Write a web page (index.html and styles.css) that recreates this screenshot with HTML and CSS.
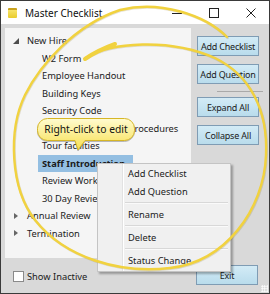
FILE: index.html
```html
<!DOCTYPE html>
<html>
<head>
<meta charset="utf-8">
<link rel="stylesheet" href="styles.css">
</head>
<body>
<div class="window">
  <div class="titlebar">
    <span class="appicon"></span>
    <span class="title">Master Checklist</span>
    <div class="caption">
      <span class="cbtn"><svg width="10" height="10" viewBox="0 0 10 10"><line x1="0" y1="5.5" x2="10" y2="5.5" stroke="#222" stroke-width="1"/></svg></span>
      <span class="cbtn"><svg width="10" height="10" viewBox="0 0 10 10"><rect x="0.5" y="0.5" width="9" height="9" fill="none" stroke="#222" stroke-width="1"/></svg></span>
      <span class="cbtn"><svg width="10" height="10" viewBox="0 0 10 10"><path d="M0.5 0.5 L9.5 9.5 M9.5 0.5 L0.5 9.5" stroke="#222" stroke-width="1"/></svg></span>
    </div>
  </div>
  <div class="client">
    <div class="tree">
      <div class="node parent"><svg class="exp" width="6" height="6" viewBox="0 0 6 6"><path d="M6 0 L6 6 L0 6 Z" fill="#4d4d4d"/></svg><span class="label">New Hire</span></div>
      <div class="node child"><span class="label">W2 Form</span></div>
      <div class="node child"><span class="label">Employee Handout</span></div>
      <div class="node child"><span class="label">Building Keys</span></div>
      <div class="node child"><span class="label">Security Code</span></div>
      <div class="node child"><span class="label">Review Policies and Procedures</span></div>
      <div class="node child"><span class="label">Tour facilities</span></div>
      <div class="node child"><span class="label sel">Staff Introduction</span></div>
      <div class="node child"><span class="label">Review Work Schedule</span></div>
      <div class="node child"><span class="label">30 Day Review</span></div>
      <div class="node parent"><svg class="exp" width="6" height="6" viewBox="0 0 6 6"><path d="M1 0 L5 3 L1 6 Z" fill="#666"/></svg><span class="label">Annual Review</span></div>
      <div class="node parent"><svg class="exp" width="6" height="6" viewBox="0 0 6 6"><path d="M1 0 L5 3 L1 6 Z" fill="#666"/></svg><span class="label">Termination</span></div>
    </div>
    <div class="actions">
      <button class="btn first">Add Checklist</button>
      <button class="btn">Add Question</button>
      <div class="sep"></div>
      <button class="btn">Expand All</button>
      <button class="btn">Collapse All</button>
    </div>
    <label class="check"><span class="box"></span><span>Show Inactive</span></label>
    <div class="exitcell"><button class="btn">Exit</button></div>
  </div>
  <span class="grip"></span>
</div>

<div class="menu">
  <div class="mitem">Add Checklist</div>
  <div class="mitem">Add Question</div>
  <div class="msep"></div>
  <div class="mitem">Rename</div>
  <div class="msep"></div>
  <div class="mitem">Delete</div>
  <div class="msep"></div>
  <div class="mitem">Status Change</div>
</div>

<div class="callout">
  <svg class="bubble" width="100" height="34" viewBox="0 0 100 34">
    <defs>
      <linearGradient id="cg" x1="0" y1="0" x2="0" y2="1">
        <stop offset="0" stop-color="#fffbd0"/>
        <stop offset="1" stop-color="#f7df50"/>
      </linearGradient>
    </defs>
    <path d="M10.5 0.5 H87.5 A10 10 0 0 1 97.5 10.5 V12.5 A10 10 0 0 1 87.5 22.5 H48 L41 32 L38 22.5 H10.5 A10 10 0 0 1 0.5 12.5 V10.5 A10 10 0 0 1 10.5 0.5 Z" fill="url(#cg)" stroke="#d6b626" stroke-width="1"/>
  </svg>
  <span class="ctext">Right-click to edit</span>
</div>

<svg class="ring" width="270" height="294" viewBox="0 0 270 294">
  <path d="M86 58 C110 42, 170 38, 215 58 C250 75, 268 110, 266 155 C264 210, 225 262, 170 268 C120 274, 65 258, 35 220 C10 188, 8 130, 25 95 C40 65, 75 25, 120 10 C160 0, 205 15, 227 37" fill="none" stroke="rgba(120,100,0,0.18)" stroke-width="2.6" stroke-linecap="round" transform="translate(0.6,0.8)"/>
  <path d="M86 58 C110 42, 170 38, 215 58 C250 75, 268 110, 266 155 C264 210, 225 262, 170 268 C120 274, 65 258, 35 220 C10 188, 8 130, 25 95 C40 65, 75 25, 120 10 C160 0, 205 15, 227 37" fill="none" stroke="#f1d23f" stroke-width="2.4" stroke-linecap="round"/>
  <path d="M85 59 C95 52, 104 48, 115 44" fill="none" stroke="#f1d23f" stroke-width="4" stroke-linecap="round"/>
</svg>
</body>
</html>
```

FILE: styles.css
```css
* { box-sizing: border-box; }
html, body { margin: 0; padding: 0; }
body {
  width: 270px;
  height: 294px;
  overflow: hidden;
  font-family: "Noto Sans", "Open Sans", sans-serif;
  font-size: 9.3px;
  color: #1b1b1b;
  position: relative;
  background: #ffffff;
}
.window {
  width: 270px;
  height: 294px;
  border: 1px solid #3a3a3a;
  display: flex;
  flex-direction: column;
  position: relative;
}
.titlebar {
  height: 23px;
  background: #ffffff;
  display: flex;
  align-items: center;
  flex: none;
}
.appicon {
  width: 9px;
  height: 10px;
  margin-left: 7px;
  margin-top: 1px;
  background: linear-gradient(#f6e36a, #e9cc2c);
  border-top: 2px solid #c9a21c;
  border-radius: 1px;
}
.title {
  margin-left: 8px;
  font-size: 10px;
  color: #111;
}
.caption {
  margin-left: auto;
  display: flex;
  height: 23px;
}
.cbtn {
  width: 37px;
  display: flex;
  align-items: center;
  justify-content: center;
}
.client {
  flex: 1;
  background: #d9d9d9;
  padding: 4px 0 0 4px;
  display: grid;
  grid-template-columns: 186px 62px;
  grid-template-rows: 230px 1fr;
  column-gap: 6px;
}
.tree {
  background: #f5f5f5;
  padding-top: 4px;
  overflow: hidden;
}
.node {
  height: 17.5px;
  display: flex;
  align-items: center;
  white-space: nowrap;
}
.parent { padding-left: 8px; }
.parent .exp { margin-right: 8px; flex: none; }
.parent .label { padding: 0; }
.child { padding-left: 33px; }
.label {
  padding: 0 4px;
  height: 17px;
  line-height: 17px;
}
.sel {
  background: #94bfe2;
  font-weight: bold;
  width: 95px;
  overflow: hidden;
}
.actions {
  display: flex;
  flex-direction: column;
  padding-top: 8px;
}
.btn {
  width: 62px;
  height: 20px;
  padding: 0;
  font-family: "Noto Sans", "Open Sans", sans-serif;
  font-size: 9px;
  letter-spacing: -0.2px;
  white-space: nowrap;
  color: #1b1b1b;
  background: linear-gradient(#d3ebf6, #b9dcec);
  border: 1px solid #7f9cb4;
  margin-bottom: 8px;
}
.sep {
  height: 1px;
  background: #a9a9a9;
  margin: -1px -4px 5px 20px;
}
.check {
  display: flex;
  align-items: center;
  margin-left: 8px;
  margin-top: 13px;
  height: 11px;
  gap: 3px;
}
.box {
  width: 11px;
  height: 11px;
  background: #ffffff;
  border: 1px solid #8a8a8a;
}
.exitcell {
  padding-top: 7px;
  margin-left: -1px;
}
.grip {
  position: absolute;
  right: 1px;
  bottom: 1px;
  width: 7px;
  height: 7px;
  background-image: radial-gradient(circle, #ffffff 0.8px, transparent 1.1px);
  background-size: 2.5px 2.5px;
}
.menu {
  position: absolute;
  left: 97px;
  top: 163px;
  width: 134px;
  background: #f0f0f0;
  border: 1px solid #c4c4c4;
  padding: 1px 2px;
  box-shadow: 2px 2px 2px rgba(0,0,0,0.3);
  background-image: linear-gradient(to right, transparent 24px, #e2e2e2 24px, #e2e2e2 25px, #ffffff 25px, #ffffff 26px, transparent 26px);
}
.mitem {
  height: 18px;
  line-height: 18px;
  padding-left: 28px;
  font-size: 9.3px;
}
.msep {
  height: 1px;
  background: #d8d8d8;
  margin: 1px 0 2px 25px;
  border-bottom: 1px solid #fafafa;
  box-sizing: content-box;
}
.callout {
  position: absolute;
  left: 37px;
  top: 118px;
  width: 100px;
  height: 34px;
}
.bubble {
  position: absolute;
  left: 0;
  top: 0;
  filter: drop-shadow(0.5px 1px 0.6px rgba(0,0,0,0.25));
}
.ctext {
  position: relative;
  display: block;
  height: 23px;
  line-height: 23px;
  width: 98px;
  text-align: center;
  font-size: 10.3px;
  color: #111;
}
.ring {
  position: absolute;
  left: 0;
  top: 0;
  pointer-events: none;
}
```
